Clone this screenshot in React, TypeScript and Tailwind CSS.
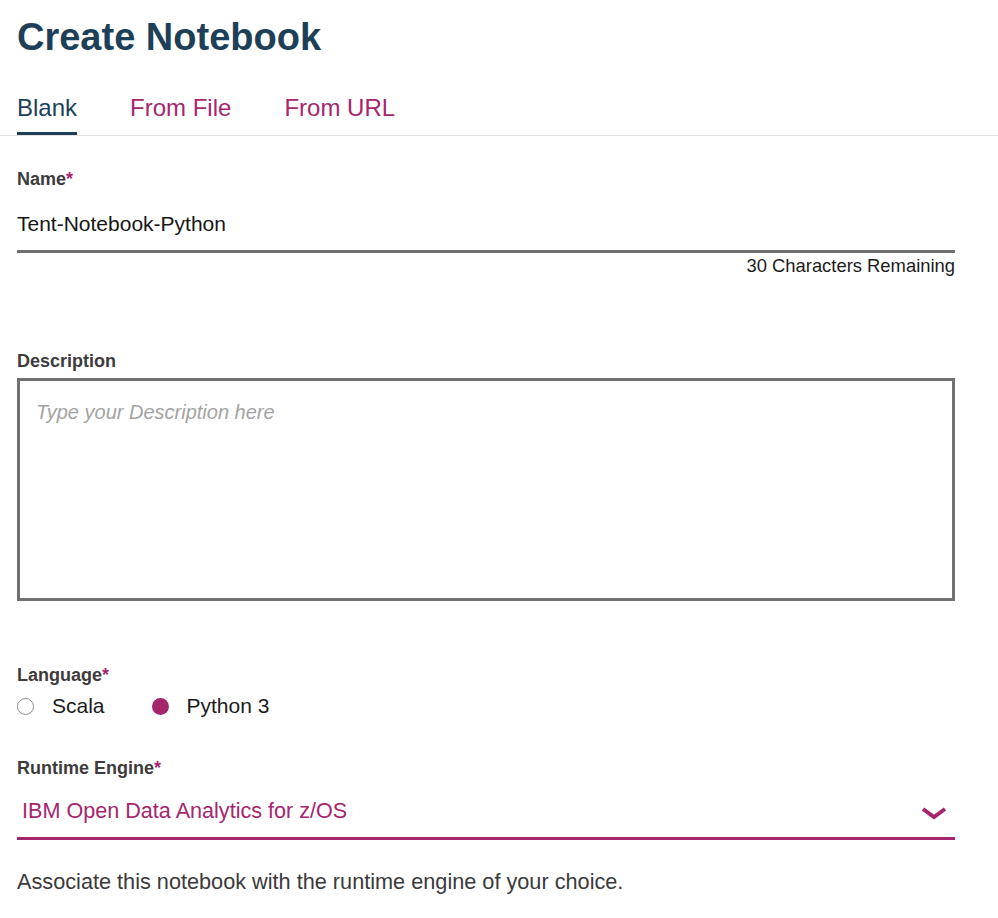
const tabs = [
  { label: 'Blank', active: true },
  { label: 'From File', active: false },
  { label: 'From URL', active: false },
];

const languages = [
  { label: 'Scala', checked: false },
  { label: 'Python 3', checked: true },
];

function Label({ text, required }: { text: string; required?: boolean }) {
  return (
    <div className="text-[18px] leading-[18px] font-bold text-[#3d3b3b]">
      {text}
      {required && <span className="text-[#a6266e]">*</span>}
    </div>
  );
}

export default function App() {
  return (
    <div className="w-[998px] min-h-[918px] bg-white font-['Liberation_Sans',Arial,sans-serif]">
      {/* Header */}
      <h1 className="pl-[17px] pt-[18px] text-[38px] leading-[38px] font-bold text-[#1d3f58]">
        Create Notebook
      </h1>

      {/* Tabs */}
      <nav className="mt-[40px] flex gap-[53px] border-b border-[#e2e2e2] pl-[17px]">
        {tabs.map((tab) => (
          <button
            key={tab.label}
            className={`border-b-[3px] pb-[12px] text-[24px] leading-[24px] ${
              tab.active ? 'border-[#1d3f58] text-[#1d3f58]' : 'border-transparent text-[#a6266e]'
            }`}
          >
            {tab.label}
          </button>
        ))}
      </nav>

      <form className="w-[955px] pl-[17px]">
        {/* Name */}
        <div className="pt-[34px]">
          <Label text="Name" required />
          <div className="mt-[26px] border-b-[3px] border-[#6f6f6f] pb-[16px] text-[21px] leading-[20px] text-[#161616]">
            Tent-Notebook-Python
          </div>
          <div className="mt-[4px] text-right text-[18.4px] leading-[18px] text-[#1b1b1b]">
            30 Characters Remaining
          </div>
        </div>

        {/* Description */}
        <div className="mt-[77px]">
          <Label text="Description" />
          <div className="mt-[8px] h-[223px] border-[3px] border-[#717171] px-[16px] pt-[21px] text-[20px] leading-[20px] italic text-[#a3a3a3]">
            Type your Description here
          </div>
        </div>

        {/* Language */}
        <div className="mt-[65px]">
          <Label text="Language" required />
          <div className="mt-[12px] flex items-center gap-[47px] text-[21px] leading-[20px] text-[#1b1b1b]">
            {languages.map((lang) => (
              <label key={lang.label} className="flex items-center gap-[18px]">
                <span
                  className={`block h-[17px] w-[17px] rounded-full ${
                    lang.checked ? 'bg-[#a6266e]' : 'border border-[#8a8f96] bg-white'
                  }`}
                />
                {lang.label}
              </label>
            ))}
          </div>
        </div>

        {/* Runtime Engine */}
        <div className="mt-[43px]">
          <Label text="Runtime Engine" required />
          <div className="mt-[24px] flex items-center justify-between border-b-[3px] border-[#a6266e] pb-[16px] pl-[5px] pr-[8px]">
            <span className="text-[21.6px] leading-[20px] text-[#a6266e]">
              IBM Open Data Analytics for z/OS
            </span>
            <svg width="26" height="14" viewBox="0 0 26 14" className="mt-[4px]">
              <polyline
                points="2,3 13,11 24,3"
                fill="none"
                stroke="#a6266e"
                strokeWidth="4"
                strokeLinejoin="miter"
              />
            </svg>
          </div>
          <p className="mt-[32px] text-[21.7px] leading-[20px] text-[#3a3a3a]">
            Associate this notebook with the runtime engine of your choice.
          </p>
        </div>
      </form>
    </div>
  );
}
